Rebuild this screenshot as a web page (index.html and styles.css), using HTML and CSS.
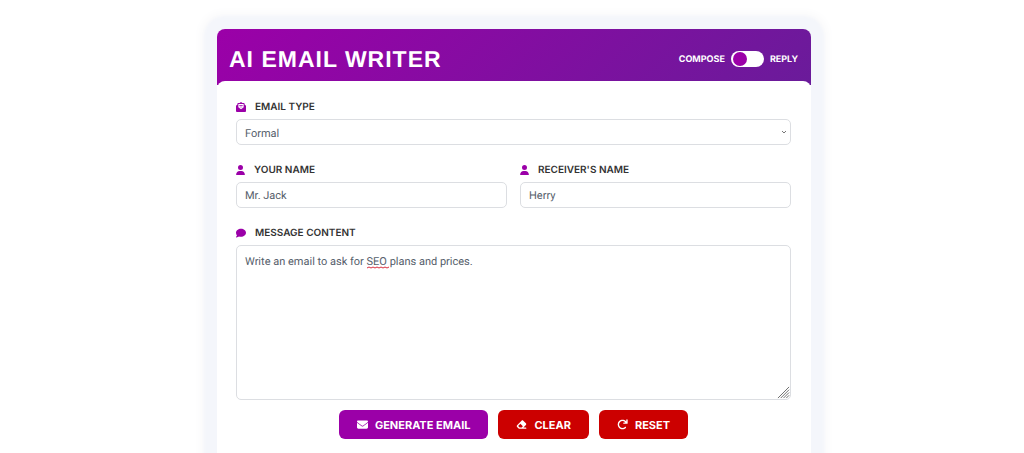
FILE: index.html
```html
<!DOCTYPE html>
<html lang="en">
<head>
  <meta charset="UTF-8">
  <meta name="viewport" content="width=device-width, initial-scale=1.0">
  <title>AI Email Writer</title>
  <link rel="stylesheet" href="styles.css">
</head>
<body>
  <main class="card">
    <header class="card-header">
      <h1>AI EMAIL WRITER</h1>
      <label class="mode" for="mode">
        <span>COMPOSE</span>
        <input type="checkbox" id="mode" class="switch">
        <span>REPLY</span>
      </label>
    </header>

    <form class="card-body">
      <div class="field">
        <label for="emailType">
          <svg class="icon" viewBox="0 0 512 512"><path d="M256 0L330 50H400Q440 50 440 90V130L512 186V464Q512 512 464 512H48Q0 512 0 464V186L72 130V90Q72 50 112 50H182z"/><path class="hole" d="M120 120Q120 100 140 100H372Q392 100 392 120V270L256 370L120 270z"/><path d="M170 160H342V200H170zM190 240H322V270H190z"/></svg>
          EMAIL TYPE
        </label>
        <div class="select-wrap">
          <select id="emailType" class="control">
            <option>Formal</option>
            <option>Informal</option>
          </select>
          <svg class="chevron" viewBox="0 0 6 4"><path d="M1 1l2 2 2-2"/></svg>
        </div>
      </div>

      <div class="row">
        <div class="field">
          <label for="yourName">
            <svg class="icon icon-user" viewBox="0 0 448 512"><path d="M224 256A128 128 0 1 0 224 0a128 128 0 1 0 0 256zm-45.700 48C79.800 304 0 383.800 0 482.300C0 498.700 13.300 512 29.700 512H418.300c16.400 0 29.700-13.300 29.700-29.700C448 383.800 368.200 304 269.700 304H178.300z"/></svg>
            YOUR NAME
          </label>
          <input type="text" id="yourName" class="control" value="Mr. Jack">
        </div>
        <div class="field">
          <label for="receiverName">
            <svg class="icon icon-user" viewBox="0 0 448 512"><path d="M224 256A128 128 0 1 0 224 0a128 128 0 1 0 0 256zm-45.700 48C79.800 304 0 383.800 0 482.300C0 498.700 13.300 512 29.700 512H418.300c16.400 0 29.700-13.300 29.700-29.700C448 383.800 368.200 304 269.700 304H178.300z"/></svg>
            RECEIVER'S NAME
          </label>
          <input type="text" id="receiverName" class="control" value="Herry">
        </div>
      </div>

      <div class="field">
        <label for="message">
          <svg class="icon" viewBox="0 0 512 512"><path d="M512 240c0 114.900-114.600 208-256 208c-37.100 0-72.300-6.400-104.100-17.900c-11.900 8.700-31.300 20.600-54.300 30.600C73.600 471.100 44.700 480 16 480c-6.500 0-12.300-3.900-14.800-9.900c-2.500-6-1.100-12.800 3.400-17.400c.3-.3 .7-.7 1.300-1.400c11-11 31-38 43-70C18 340 0 292 0 240C0 125.100 114.600 32 256 32s256 93.100 256 208z"/></svg>
          MESSAGE CONTENT
        </label>
        <div class="message-wrap">
          <textarea id="message" class="control" spellcheck="false">Write an email to ask for SEO plans and prices.</textarea>
          <div class="spelling" aria-hidden="true"><span class="before">Write an email to ask for </span><svg class="typo" viewBox="0 0 22 3"><path d="M0 2l2-1 2 1 2-1 2 1 2-1 2 1 2-1 2 1 2-1 2 1 2-1"/></svg></div>
          <svg class="grip" viewBox="0 0 14 14"><path d="M1 13L13 1M4 13L13 4M7 13L13 7M10 13L13 10"/></svg>
        </div>
      </div>

      <div class="actions">
        <button type="button" class="btn btn-generate">
          <svg class="btn-icon" viewBox="0 0 512 512"><path d="M48 64C21.500 64 0 85.500 0 112c0 15.100 7.100 29.300 19.200 38.400L236.800 313.600c11.400 8.500 27 8.500 38.400 0L492.800 150.400c12.100-9.100 19.200-23.300 19.200-38.400c0-26.500-21.500-48-48-48H48zM0 176V384c0 35.300 28.700 64 64 64H448c35.300 0 64-28.700 64-64V176L294.400 339.200c-22.800 17.100-54 17.100-76.800 0L0 176z"/></svg>
          GENERATE EMAIL
        </button>
        <button type="button" class="btn btn-danger">
          <svg class="btn-icon" viewBox="0 0 576 512"><path d="M290.700 57.400L57.400 290.700c-25 25-25 65.500 0 90.500l80 80c12 12 28.300 18.700 45.300 18.700H512c17.700 0 32-14.300 32-32s-14.300-32-32-32H387.900L518.600 285.300c25-25 25-65.500 0-90.500L381.300 57.400c-25-25-65.500-25-90.500 0zM297.400 416l-105.400 0-80-80L227.300 220.700 360 353.400 297.400 416z"/></svg>
          CLEAR
        </button>
        <button type="reset" class="btn btn-danger">
          <svg class="btn-icon" viewBox="0 0 512 512"><path d="M386.300 160H320c-17.700 0-32 14.300-32 32s14.300 32 32 32H464c17.700 0 32-14.300 32-32V48c0-17.700-14.300-32-32-32s-32 14.300-32 32V114.700L414.400 97.600c-87.500-87.500-229.300-87.500-316.800 0s-87.500 229.300 0 316.800s229.300 87.500 316.800 0c12.500-12.500 12.500-32.800 0-45.300s-32.800-12.500-45.300 0c-62.500 62.500-163.800 62.500-226.300 0s-62.500-163.800 0-226.300s163.800-62.500 226.300 0L386.300 160z"/></svg>
          RESET
        </button>
      </div>
    </form>
  </main>
</body>
</html>
```

FILE: styles.css
```css
* { box-sizing: border-box; }
body { margin: 0; padding: 29px 8px 0 12px; background: #fff; font-family: Inter, "Liberation Sans", sans-serif; color: #333; overflow-x: hidden; text-rendering: geometricPrecision; }

.card { max-width: 594px; margin: 0 auto; background: #fff; border-radius: 8px; box-shadow: 0 0 3px 13px #f4f6fb, 0 0 8px 17px #fafafb; }
.card-header { display: flex; align-items: center; justify-content: space-between; height: 56px; padding: 4px 13px 0 12px; background: linear-gradient(135deg, #9b00a8, #6a1b9a); border-radius: 8px 8px 0 0; color: #fff; }
h1 { margin: 0; font: bold 23px/28px "Liberation Sans", Arial, sans-serif; letter-spacing: 1px; }

.mode { display: flex; align-items: center; gap: 6px; font-size: 9px; font-weight: 700; }
.switch { appearance: none; width: 33px; height: 16px; margin: 0; padding: 1px 2px; background: #fff; border-radius: 8px; }
.switch::before { content: ""; display: block; width: 14px; height: 14px; border-radius: 50%; background: #9b00a8; }
.switch:checked::before { margin-left: auto; }

.card-body { position: relative; margin-top: -4px; padding: 20px 20px 30px 19px; background: #fff; border-radius: 8px; }
.field { margin-bottom: 19px; }
.field label { display: flex; align-items: center; gap: 9px; height: 12px; margin-bottom: 6px; font-size: 10px; font-weight: 600; }
.icon { width: 10px; height: 10px; fill: #9b00a8; }
.icon-user { width: 9px; }
.hole { fill: #fff; }

.control { display: block; width: 100%; height: 26px; margin: 0; padding: 0 8px; border: 1px solid #dcdee2; border-radius: 5px; background: #fff; color: #56606b; font: 11px/16px Roboto, "Liberation Sans", sans-serif; text-rendering: geometricPrecision; outline: none; }
.select-wrap { position: relative; }
select.control { appearance: none; padding-top: 4px; }
.chevron { position: absolute; right: 4px; top: 11px; width: 6px; height: 4px; fill: none; stroke: #777; }

.row { display: grid; grid-template-columns: 1fr 1fr; gap: 13px; }

.message-wrap { position: relative; }
textarea.control { height: 155px; padding: 8px; resize: none; }
.spelling { position: absolute; left: 9px; top: 9px; font: 11px/16px Roboto, "Liberation Sans", sans-serif; white-space: pre; pointer-events: none; }
.before { visibility: hidden; }
.typo { width: 22px; height: 3px; vertical-align: -4px; fill: none; stroke: #d93040; }
.grip { position: absolute; right: 1px; bottom: 1px; width: 13px; height: 13px; fill: none; stroke: #666; }

.actions { display: flex; justify-content: center; gap: 10px; margin-top: -9px; }
.btn { display: flex; align-items: center; gap: 7px; height: 29px; padding: 0 18px; border: 0; border-radius: 6px; color: #fff; font: 700 11px/16px Inter, "Liberation Sans", sans-serif; text-rendering: geometricPrecision; cursor: pointer; }
.btn-generate { background: #9b00a8; }
.btn-danger { background: #cc0000; }
.btn-icon { width: 11px; height: 11px; fill: #fff; }
```
